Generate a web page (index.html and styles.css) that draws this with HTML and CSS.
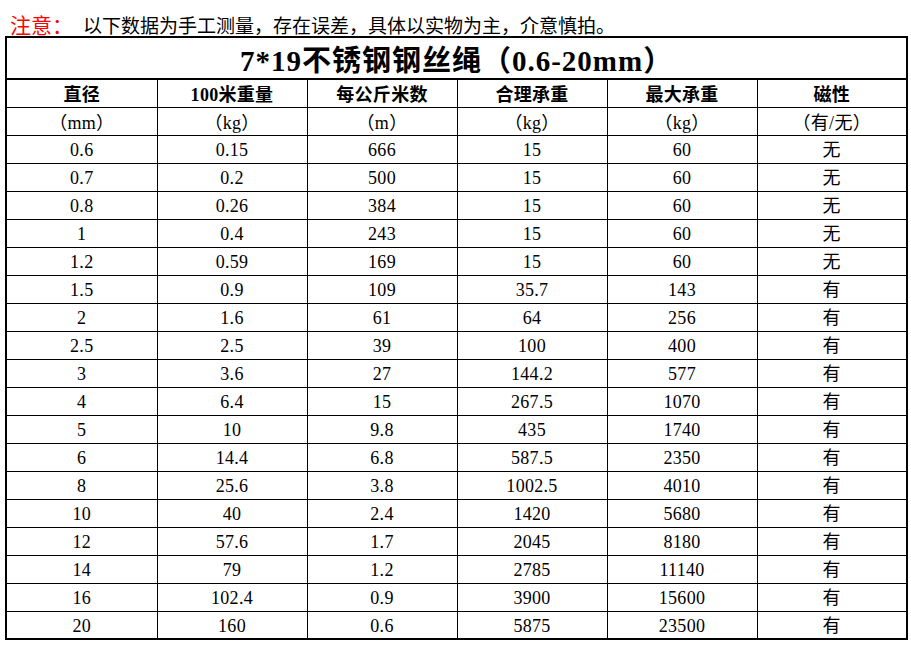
FILE: index.html
```html
<!DOCTYPE html>
<html lang="zh-CN">
<head>
<meta charset="utf-8">
<title>7*19不锈钢钢丝绳</title>
<link rel="stylesheet" href="styles.css">
</head>
<body>
<div class="note"><span class="note-label">注意：</span><span class="note-text">以下数据为手工测量，存在误差，具体以实物为主，介意慎拍。</span></div>
<table class="spec">
<colgroup><col class="c1"><col class="c"><col class="c"><col class="c"><col class="c"><col class="c"></colgroup>
<thead>
<tr class="title-row"><th colspan="6" class="title">7*19不锈钢钢丝绳（0.6-20mm）</th></tr>
<tr class="head-row"><th>直径</th><th>100米重量</th><th>每公斤米数</th><th>合理承重</th><th>最大承重</th><th>磁性</th></tr>
<tr class="unit-row"><td>（mm）</td><td>（kg）</td><td>（m）</td><td>（kg）</td><td>（kg）</td><td>（有/无）</td></tr>
</thead>
<tbody>
<tr><td>0.6</td><td>0.15</td><td>666</td><td>15</td><td>60</td><td>无</td></tr>
<tr><td>0.7</td><td>0.2</td><td>500</td><td>15</td><td>60</td><td>无</td></tr>
<tr><td>0.8</td><td>0.26</td><td>384</td><td>15</td><td>60</td><td>无</td></tr>
<tr><td>1</td><td>0.4</td><td>243</td><td>15</td><td>60</td><td>无</td></tr>
<tr><td>1.2</td><td>0.59</td><td>169</td><td>15</td><td>60</td><td>无</td></tr>
<tr><td>1.5</td><td>0.9</td><td>109</td><td>35.7</td><td>143</td><td>有</td></tr>
<tr><td>2</td><td>1.6</td><td>61</td><td>64</td><td>256</td><td>有</td></tr>
<tr><td>2.5</td><td>2.5</td><td>39</td><td>100</td><td>400</td><td>有</td></tr>
<tr><td>3</td><td>3.6</td><td>27</td><td>144.2</td><td>577</td><td>有</td></tr>
<tr><td>4</td><td>6.4</td><td>15</td><td>267.5</td><td>1070</td><td>有</td></tr>
<tr><td>5</td><td>10</td><td>9.8</td><td>435</td><td>1740</td><td>有</td></tr>
<tr><td>6</td><td>14.4</td><td>6.8</td><td>587.5</td><td>2350</td><td>有</td></tr>
<tr><td>8</td><td>25.6</td><td>3.8</td><td>1002.5</td><td>4010</td><td>有</td></tr>
<tr><td>10</td><td>40</td><td>2.4</td><td>1420</td><td>5680</td><td>有</td></tr>
<tr><td>12</td><td>57.6</td><td>1.7</td><td>2045</td><td>8180</td><td>有</td></tr>
<tr><td>14</td><td>79</td><td>1.2</td><td>2785</td><td>11140</td><td>有</td></tr>
<tr><td>16</td><td>102.4</td><td>0.9</td><td>3900</td><td>15600</td><td>有</td></tr>
<tr><td>20</td><td>160</td><td>0.6</td><td>5875</td><td>23500</td><td>有</td></tr>
</tbody>
</table>
</body>
</html>
```
FILE: styles.css
```css
html, body {
  margin: 0;
  padding: 0;
  background: #ffffff;
}
body {
  font-family: "Liberation Serif", "Noto Sans CJK SC", serif;
  color: #000000;
}
.note {
  height: 36px;
  box-sizing: border-box;
  padding: 12px 0 0 10px;
  line-height: 24px;
  white-space: nowrap;
}
.note-label {
  font-family: "Noto Sans CJK SC", sans-serif;
  font-size: 21px;
  color: #ff0000;
}
.note-text {
  font-family: "Noto Sans CJK SC", sans-serif;
  font-size: 19px;
  margin-left: 10px;
}
.spec {
  margin-left: 5px;
  border-collapse: collapse;
  table-layout: fixed;
  width: 902px;
  border: 2px solid #000000;
  font-size: 18px;
}
.c1 { width: 151px; }
.c { width: 150px; }
.spec th, .spec td {
  border: 1px solid #000000;
  padding: 2px 0 0 0;
  text-align: center;
  vertical-align: middle;
  line-height: 20px;
  white-space: nowrap;
  letter-spacing: 0.3px;
}
.title-row { height: 42px; }
.spec .title {
  font-size: 29px;
  font-weight: bold;
  letter-spacing: 1px;
  border-bottom: 2px solid #000000;
  line-height: 30px;
  padding-top: 5px;
}
.head-row { height: 28px; }
.head-row th { font-weight: bold; font-size: 18px; padding-top: 4px; }
.unit-row { height: 28px; }
.unit-row td { padding-top: 4px; }
.spec tbody tr { height: 28px; }
```
